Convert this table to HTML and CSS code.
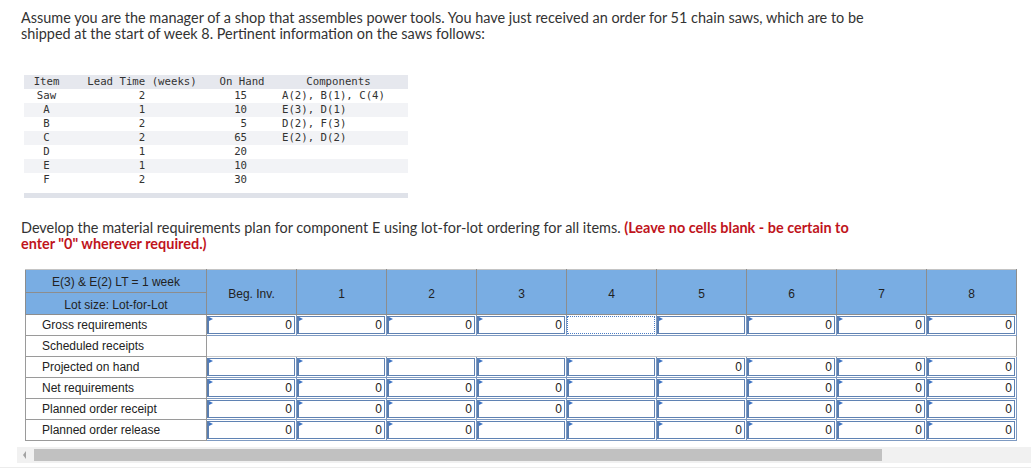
FILE: index.html
```html
<!DOCTYPE html>
<html>
<head>
<meta charset="utf-8">
<title>MRP</title>
<link rel="stylesheet" href="styles.css">
</head>
<body>
<div class="page">
  <p class="intro">Assume you are the manager of a shop that assembles power tools. You have just received an order for 51 chain saws, which are to be<br>shipped at the start of week 8. Pertinent information on the saws follows:</p>

  <div class="info-wrap">
    <table class="info">
      <thead>
        <tr><th class="c-item">Item</th><th class="c-lt">Lead Time (weeks)</th><th class="c-oh">On Hand</th><th class="c-comp">Components</th></tr>
      </thead>
      <tbody>
        <tr><td class="c-item">Saw</td><td class="c-lt">2</td><td class="c-oh">15</td><td class="c-comp">A(2), B(1), C(4)</td></tr>
        <tr class="alt"><td class="c-item">A</td><td class="c-lt">1</td><td class="c-oh">10</td><td class="c-comp">E(3), D(1)</td></tr>
        <tr><td class="c-item">B</td><td class="c-lt">2</td><td class="c-oh">5</td><td class="c-comp">D(2), F(3)</td></tr>
        <tr class="alt"><td class="c-item">C</td><td class="c-lt">2</td><td class="c-oh">65</td><td class="c-comp">E(2), D(2)</td></tr>
        <tr><td class="c-item">D</td><td class="c-lt">1</td><td class="c-oh">20</td><td class="c-comp"></td></tr>
        <tr class="alt"><td class="c-item">E</td><td class="c-lt">1</td><td class="c-oh">10</td><td class="c-comp"></td></tr>
        <tr><td class="c-item">F</td><td class="c-lt">2</td><td class="c-oh">30</td><td class="c-comp"></td></tr>
      </tbody>
    </table>
    <div class="info-foot"></div>
  </div>

  <p class="task">Develop the material requirements plan for component E using lot-for-lot ordering for all items. <strong class="warn">(Leave no cells blank - be certain to<br>enter "0" wherever required.)</strong></p>

  <div class="mrp-wrap">
    <table class="mrp">
      <colgroup>
        <col class="w-label"><col class="w-wk"><col class="w-wk"><col class="w-wk"><col class="w-wk"><col class="w-wk"><col class="w-wk"><col class="w-wk"><col class="w-wk"><col class="w-wk">
      </colgroup>
      <thead>
        <tr class="h1">
          <th class="corner">E(3) &amp; E(2) LT = 1 week</th>
          <th rowspan="2" class="wk-head">Beg. Inv.</th>
          <th rowspan="2" class="wk-head">1</th>
          <th rowspan="2" class="wk-head">2</th>
          <th rowspan="2" class="wk-head">3</th>
          <th rowspan="2" class="wk-head">4</th>
          <th rowspan="2" class="wk-head">5</th>
          <th rowspan="2" class="wk-head">6</th>
          <th rowspan="2" class="wk-head">7</th>
          <th rowspan="2" class="wk-head">8</th>
        </tr>
        <tr class="h2"><th class="corner">Lot size: Lot-for-Lot</th></tr>
      </thead>
      <tbody>
        <tr>
          <td class="label">Gross requirements</td>
          <td class="cell"><div class="inp">0</div></td>
          <td class="cell"><div class="inp">0</div></td>
          <td class="cell"><div class="inp">0</div></td>
          <td class="cell"><div class="inp">0</div></td>
          <td class="cell"><div class="inp focus"></div></td>
          <td class="cell"><div class="inp"></div></td>
          <td class="cell"><div class="inp">0</div></td>
          <td class="cell"><div class="inp">0</div></td>
          <td class="cell"><div class="inp">0</div></td>
        </tr>
        <tr>
          <td class="label">Scheduled receipts</td>
          <td class="blank" colspan="9"></td>
        </tr>
        <tr>
          <td class="label">Projected on hand</td>
          <td class="cell"><div class="inp"></div></td>
          <td class="cell"><div class="inp"></div></td>
          <td class="cell"><div class="inp"></div></td>
          <td class="cell"><div class="inp"></div></td>
          <td class="cell"><div class="inp"></div></td>
          <td class="cell"><div class="inp">0</div></td>
          <td class="cell"><div class="inp">0</div></td>
          <td class="cell"><div class="inp">0</div></td>
          <td class="cell"><div class="inp">0</div></td>
        </tr>
        <tr>
          <td class="label">Net requirements</td>
          <td class="cell"><div class="inp">0</div></td>
          <td class="cell"><div class="inp">0</div></td>
          <td class="cell"><div class="inp">0</div></td>
          <td class="cell"><div class="inp">0</div></td>
          <td class="cell"><div class="inp"></div></td>
          <td class="cell"><div class="inp"></div></td>
          <td class="cell"><div class="inp">0</div></td>
          <td class="cell"><div class="inp">0</div></td>
          <td class="cell"><div class="inp">0</div></td>
        </tr>
        <tr>
          <td class="label">Planned order receipt</td>
          <td class="cell"><div class="inp">0</div></td>
          <td class="cell"><div class="inp">0</div></td>
          <td class="cell"><div class="inp">0</div></td>
          <td class="cell"><div class="inp">0</div></td>
          <td class="cell"><div class="inp"></div></td>
          <td class="cell"><div class="inp"></div></td>
          <td class="cell"><div class="inp">0</div></td>
          <td class="cell"><div class="inp">0</div></td>
          <td class="cell"><div class="inp">0</div></td>
        </tr>
        <tr>
          <td class="label">Planned order release</td>
          <td class="cell"><div class="inp">0</div></td>
          <td class="cell"><div class="inp">0</div></td>
          <td class="cell"><div class="inp">0</div></td>
          <td class="cell"><div class="inp"></div></td>
          <td class="cell"><div class="inp"></div></td>
          <td class="cell"><div class="inp">0</div></td>
          <td class="cell"><div class="inp">0</div></td>
          <td class="cell"><div class="inp">0</div></td>
          <td class="cell"><div class="inp">0</div></td>
        </tr>
      </tbody>
    </table>
  </div>

  <div class="hscroll">
    <span class="hs-arrow"></span>
    <span class="hs-thumb"></span>
  </div>
  <div class="baseline"></div>
</div>
</body>
</html>
```

FILE: styles.css
```css
html, body {
  margin: 0;
  padding: 0;
  background: #ffffff;
}

.page {
  width: 1031px;
  padding: 10px 0 0 0;
  font-family: Lato, "Liberation Sans", sans-serif;
  color: #333333;
}

.intro,
.task {
  margin: 0 0 0 21px;
  font-size: 14.45px;
  line-height: 16px;
}

.task {
  margin-top: 22px;
}

.warn {
  color: #c0141c;
  font-weight: 700;
}

/* ---------- info table ---------- */
.info-wrap {
  margin: 33px 0 0 24px;
  width: 384px;
}

.info {
  border-collapse: collapse;
  width: 384px;
  table-layout: fixed;
  font-family: "DejaVu Sans Mono", "Liberation Mono", monospace;
  font-size: 10.7px;
  line-height: 14px;
  color: #333333;
}

.info th,
.info td {
  padding: 0;
  height: 14px;
  font-weight: normal;
  white-space: pre;
}

.info thead tr {
  background: #e6e8ee;
}

.info tr.alt {
  background: #f2f3f6;
}

.info .c-item { width: 45px; text-align: center; }
.info .c-lt { width: 146px; text-align: center; }
.info .c-oh { width: 54px; }
.info th.c-oh { text-align: center; }
.info td.c-oh { text-align: right; padding-right: 22px; }
.info .c-comp { width: 139px; }
.info th.c-comp { text-align: center; }
.info td.c-comp { text-align: left; padding-left: 13px; }

.info-foot {
  margin-top: 6px;
  height: 5px;
  background: #dfe2e9;
}

/* ---------- MRP table ---------- */
.mrp-wrap {
  margin: 17px 0 0 25px;
  width: 991px;
}

.mrp {
  border-collapse: collapse;
  table-layout: fixed;
  width: 991px;
  font-family: "Liberation Sans", Arial, sans-serif;
  font-size: 12px;
  color: #222222;
}

.w-label { width: 181px; }
.w-wk { width: 90px; }

.mrp th {
  background: #79ade3;
  border: 1px solid #8d8d8d;
  font-weight: normal;
  padding: 0;
  text-align: center;
}

.mrp th.wk-head {
  padding-top: 3px;
}

.mrp thead tr.h1 th {
  border-top: 1px solid #c4c4c4;
}

.mrp tr.h1 th.corner {
  height: 20px;
  padding-top: 2px;
}

.mrp tr.h2 th.corner {
  height: 19px;
  padding-top: 2px;
}

.mrp td {
  padding: 0;
}

.mrp td.label {
  border: 1px solid #9a9a9a;
  padding-left: 16px;
  height: 20px;
  line-height: 14px;
  text-align: left;
  background: #ffffff;
}

.mrp td.cell {
  border: 1px solid #7f9bc2;
  padding: 1px 1px 1px 0;
}

.mrp td.blank {
  border: 1px solid #c9c9c9;
  border-right: 1px solid #9a9a9a;
}

.inp {
  position: relative;
  height: 16px;
  border: 1px solid #5f82b3;
  border-left: 2px solid #5a7eb0;
  background: #ffffff;
  text-align: right;
  padding-right: 2px;
  line-height: 16px;
  font-size: 12px;
  color: #222222;
}

.inp::before {
  content: "";
  position: absolute;
  left: 0;
  top: 0;
  width: 0;
  height: 0;
  border-top: 2px solid transparent;
  border-bottom: 2px solid transparent;
  border-left: 4px solid #3f74c4;
}

.inp.focus {
  border: 1px dotted #4a7cc4;
  border-left: 1px dotted #4a7cc4;
}

.inp.focus::before {
  display: none;
}

/* ---------- scrollbar ---------- */
.hscroll {
  position: relative;
  margin: 6px 0 0 17px;
  height: 16px;
  background: #f1f1f1;
}

.hs-arrow {
  position: absolute;
  left: 6px;
  top: 4px;
  width: 0;
  height: 0;
  border-top: 4px solid transparent;
  border-bottom: 4px solid transparent;
  border-right: 3px solid #a3a3a3;
}

.hs-thumb {
  position: absolute;
  left: 17px;
  top: 2px;
  width: 848px;
  height: 12px;
  background: #c1c1c1;
}

.baseline {
  margin-top: 4px;
  height: 1px;
  background: #ececec;
}
```
